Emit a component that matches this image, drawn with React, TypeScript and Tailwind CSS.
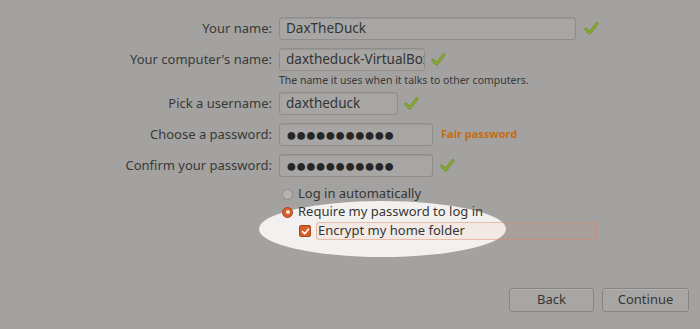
import React from "react";

function Check() {
  return (
    <svg width="15" height="15" viewBox="0 0 15 15" className="shrink-0">
      <path
        d="M2 8.2 L5.6 12 L13 2.6"
        fill="none"
        stroke="#6f8f22"
        strokeWidth="3"
        strokeLinecap="round"
        strokeLinejoin="round"
      />
      <path
        d="M2 8.2 L5.6 12 L13 2.6"
        fill="none"
        stroke="#8fb035"
        strokeWidth="1.4"
        strokeLinecap="round"
        strokeLinejoin="round"
      />
    </svg>
  );
}

function Field({ value, width, password }: { value: string; width: string; password?: boolean }) {
  return (
    <div
      className={`${width} h-[23px] flex items-center px-[6px] rounded-[3px] border border-[#8e8d8b] bg-[#a7a6a4] text-[13.5px] text-[#343433] shadow-[inset_0_1px_1px_rgba(0,0,0,0.08)] overflow-hidden whitespace-nowrap`}
    >
      {password ? (
        <span className="tracking-[-1.1px] text-[18px] leading-[21px] text-[#262626]">●●●●●●●●●●●</span>
      ) : (
        value
      )}
    </div>
  );
}

function Label({ children }: { children: React.ReactNode }) {
  return <div className="text-right text-[13px] text-[#393938] leading-[23px]">{children}</div>;
}

export default function App() {
  return (
    <div
      className="relative w-[700px] h-[329px] bg-[#a3a2a0] overflow-hidden"
      style={{ fontFamily: '"Noto Sans", "Open Sans", sans-serif' }}
    >
      {/* spotlight overlay */}
      <div className="absolute left-[259px] top-[201px] w-[247px] h-[56px] rounded-[50%] bg-[#f2f1ef]" />

      <div className="relative pt-[17px]">
        <div className="grid grid-cols-[272px_1fr] gap-x-[7px] items-start">
          <Label>Your name:</Label>
          <div className="flex items-center gap-[8px]">
            <Field value="DaxTheDuck" width="w-[297px]" />
            <Check />
          </div>

          <div className="col-span-2 h-[8px]" />

          <Label>Your computer's name:</Label>
          <div className="flex flex-col">
            <div className="flex items-center gap-[6px]">
              <Field value="daxtheduck-VirtualBox" width="w-[146px]" />
              <Check />
            </div>
            <div className="text-[10.5px] text-[#383837] leading-[13px] mt-[3px]">
              The name it uses when it talks to other computers.
            </div>
          </div>

          <div className="col-span-2 h-[5px]" />

          <Label>Pick a username:</Label>
          <div className="flex items-center gap-[6px]">
            <Field value="daxtheduck" width="w-[119px]" />
            <Check />
          </div>

          <div className="col-span-2 h-[8px]" />

          <Label>Choose a password:</Label>
          <div className="flex items-center gap-[8px]">
            <Field value="" password width="w-[154px]" />
            <span className="text-[11px] font-bold text-[#c56c12]">Fair password</span>
          </div>

          <div className="col-span-2 h-[8px]" />

          <Label>Confirm your password:</Label>
          <div className="flex items-center gap-[7px]">
            <Field value="" password width="w-[154px]" />
            <Check />
          </div>

          <div className="col-span-2 h-[8px]" />

          <div />
          <div className="flex flex-col text-[13px] text-[#363635]">
            <div className="flex items-center gap-[5px] h-[18px] pl-[3px]">
              <span className="w-[11px] h-[11px] rounded-full border border-[#8f8e8c] bg-[#b4b3b1]" />
              <span>Log in automatically</span>
            </div>
            <div className="flex items-center gap-[5px] h-[18px] pl-[3px]">
              <span className="w-[11px] h-[11px] rounded-full bg-[#d4602c] border border-[#a9471c] flex items-center justify-center">
                <span className="w-[4px] h-[4px] rounded-full bg-[#f4e2d8]" />
              </span>
              <span>Require my password to log in</span>
            </div>
            <div className="flex items-center gap-[5px] h-[20px] pl-[20px]">
              <span className="w-[12px] h-[12px] rounded-[2px] bg-[#d4602c] border border-[#a9471c] flex items-center justify-center">
                <svg width="9" height="9" viewBox="0 0 9 9">
                  <path d="M1.5 4.6 L3.7 6.8 L7.6 2" fill="none" stroke="#fff" strokeWidth="1.6" strokeLinecap="round" strokeLinejoin="round" />
                </svg>
              </span>
              <span className="w-[281px] h-[18px] flex items-center pl-[1px] rounded-[3px] border border-[rgba(224,128,96,0.45)] bg-[rgba(240,140,100,0.08)]">
                Encrypt my home folder
              </span>
            </div>
          </div>
        </div>

        <div className="flex justify-end gap-[8px] pr-[11px] mt-[47px]">
          <button className="w-[85px] h-[24px] rounded-[3px] border border-[#858482] bg-[#a7a6a4] text-[13px] text-[#363635] shadow-[inset_0_1px_0_rgba(255,255,255,0.15)]">
            Back
          </button>
          <button className="w-[87px] h-[24px] rounded-[3px] border border-[#858482] bg-[#a7a6a4] text-[13px] text-[#363635] shadow-[inset_0_1px_0_rgba(255,255,255,0.15)]">
            Continue
          </button>
        </div>
      </div>
    </div>
  );
}
